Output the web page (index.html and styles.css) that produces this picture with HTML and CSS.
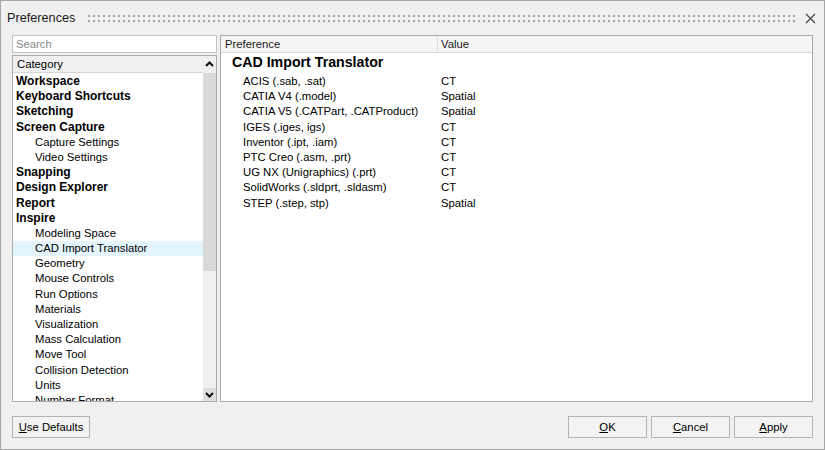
FILE: index.html
```html
<!DOCTYPE html>
<html>
<head>
<meta charset="utf-8">
<title>Preferences</title>
<link rel="stylesheet" href="styles.css">
</head>
<body>
<div class="window">
  <div class="titlebar">
    <span class="title">Preferences</span>
    <div class="grip"></div>
    <div class="close">
      <svg width="11" height="11" viewBox="0 0 11 11"><path d="M1 1 L10 10 M10 1 L1 10" stroke="#4a4a4a" stroke-width="1.3" fill="none"/></svg>
    </div>
  </div>
  <div class="main">
    <div class="leftcol">
      <div class="search">Search</div>
      <div class="listbox">
        <div class="listinner">
          <div class="listhead">Category</div>
          <div class="rows">
            <div class="row top">Workspace</div>
            <div class="row top">Keyboard Shortcuts</div>
            <div class="row top">Sketching</div>
            <div class="row top">Screen Capture</div>
            <div class="row sub">Capture Settings</div>
            <div class="row sub">Video Settings</div>
            <div class="row top">Snapping</div>
            <div class="row top">Design Explorer</div>
            <div class="row top">Report</div>
            <div class="row top">Inspire</div>
            <div class="row sub">Modeling Space</div>
            <div class="row sub selected">CAD Import Translator</div>
            <div class="row sub">Geometry</div>
            <div class="row sub">Mouse Controls</div>
            <div class="row sub">Run Options</div>
            <div class="row sub">Materials</div>
            <div class="row sub">Visualization</div>
            <div class="row sub">Mass Calculation</div>
            <div class="row sub">Move Tool</div>
            <div class="row sub">Collision Detection</div>
            <div class="row sub">Units</div>
            <div class="row sub">Number Format</div>
          </div>
        </div>
        <div class="scrollbar">
          <div class="sb-up">
            <svg width="9" height="6" viewBox="0 0 9 6"><path d="M1 5 L4.5 1.5 L8 5" stroke="#111" stroke-width="2" fill="none"/></svg>
          </div>
          <div class="sb-thumb"></div>
          <div class="sb-track"></div>
          <div class="sb-down">
            <svg width="9" height="6" viewBox="0 0 9 6"><path d="M1 1 L4.5 4.5 L8 1" stroke="#111" stroke-width="2" fill="none"/></svg>
          </div>
        </div>
      </div>
    </div>
    <div class="panel">
      <div class="phead">
        <div class="pcol1">Preference</div>
        <div class="pcol2">Value</div>
      </div>
      <div class="section">CAD Import Translator</div>
      <div class="prow"><div class="pname">ACIS (.sab, .sat)</div><div class="pval">CT</div></div>
      <div class="prow"><div class="pname">CATIA V4 (.model)</div><div class="pval">Spatial</div></div>
      <div class="prow"><div class="pname">CATIA V5 (.CATPart, .CATProduct)</div><div class="pval">Spatial</div></div>
      <div class="prow"><div class="pname">IGES (.iges, igs)</div><div class="pval">CT</div></div>
      <div class="prow"><div class="pname">Inventor (.ipt, .iam)</div><div class="pval">CT</div></div>
      <div class="prow"><div class="pname">PTC Creo (.asm, .prt)</div><div class="pval">CT</div></div>
      <div class="prow"><div class="pname">UG NX (Unigraphics) (.prt)</div><div class="pval">CT</div></div>
      <div class="prow"><div class="pname">SolidWorks (.sldprt, .sldasm)</div><div class="pval">CT</div></div>
      <div class="prow"><div class="pname">STEP (.step, stp)</div><div class="pval">Spatial</div></div>
    </div>
  </div>
  <div class="footer">
    <button class="btn btn-defaults"><u>U</u>se Defaults</button>
    <div class="spacer"></div>
    <button class="btn"><u>O</u>K</button>
    <button class="btn"><u>C</u>ancel</button>
    <button class="btn"><u>A</u>pply</button>
  </div>
</div>
</body>
</html>
```

FILE: styles.css
```css
* { box-sizing: border-box; }
html, body { margin: 0; padding: 0; }
body {
  width: 825px;
  height: 450px;
  overflow: hidden;
  font-family: "Liberation Sans", Arial, sans-serif;
  font-size: 11.3px;
  color: #000;
  background: #f0f0f0;
}
.window {
  width: 825px;
  height: 450px;
  border: 1px solid #a6a6a6;
  background: #f0f0f0;
  display: flex;
  flex-direction: column;
}
.titlebar {
  height: 34px;
  flex: none;
  display: flex;
  align-items: center;
  padding-left: 6px;
}
.title {
  font-size: 12.7px;
  color: #1a1a1a;
  margin-top: -1px;
}
.grip {
  flex: 1;
  height: 8px;
  margin-left: 13px;
  margin-top: 1px;
  background-image: linear-gradient(to right, #a3a3a3 2px, transparent 2px);
  background-size: 5px 5px;
  background-repeat: repeat;
  -webkit-mask-image: linear-gradient(to bottom, #000 2px, transparent 2px);
  -webkit-mask-size: 5px 5px;
  mask-image: linear-gradient(to bottom, #000 2px, transparent 2px);
  mask-size: 5px 5px;
}
.close {
  width: 29px;
  flex: none;
  display: flex;
  justify-content: center;
  align-items: center;
  padding-left: 2px;
}
.close svg { display: block; }
.main {
  height: 367px;
  flex: none;
  display: flex;
  padding: 0 11px;
  gap: 3px;
}
.leftcol {
  width: 205px;
  flex: none;
  display: flex;
  flex-direction: column;
  gap: 2px;
}
.search {
  height: 18px;
  flex: none;
  background: #fff;
  border: 1px solid #c4c4c4;
  color: #8a8a8a;
  padding-left: 3px;
  line-height: 16px;
}
.listbox {
  flex: 1;
  border: 1px solid #ababab;
  background: #fff;
  display: flex;
  overflow: hidden;
}
.listinner {
  flex: 1;
  min-width: 0;
  overflow: hidden;
}
.listhead {
  height: 17px;
  background: #f0f0f0;
  border-bottom: 1px solid #d6d6d6;
  padding-left: 4px;
  line-height: 16px;
}
.rows { padding-top: 1px; }
.row {
  height: 15.2px;
  line-height: 15.2px;
  white-space: nowrap;
}
.row.top {
  font-weight: bold;
  font-size: 12px;
  padding-left: 3px;
}
.row.sub { padding-left: 22px; }
.row.selected { background: #e3f4fc; }
.scrollbar {
  width: 13px;
  flex: none;
  display: flex;
  flex-direction: column;
  background: #f0f0f0;
}
.sb-up {
  height: 17px;
  display: flex;
  align-items: center;
  justify-content: center;
  padding-bottom: 2px;
}
.sb-thumb {
  height: 198px;
  background: #d9d9d9;
}
.sb-track { flex: 1; background: #f0f0f0; }
.sb-down {
  height: 13px;
  background: #dedede;
  display: flex;
  align-items: center;
  justify-content: center;
}
.sb-up svg, .sb-down svg { display: block; }
.panel {
  flex: 1;
  border: 1px solid #ababab;
  background: #fff;
  overflow: hidden;
}
.phead {
  height: 17px;
  display: flex;
  background: #f5f5f5;
  border-bottom: 1px solid #d9d9d9;
  line-height: 16px;
  color: #1a1a1a;
}
.pcol1 {
  width: 217px;
  flex: none;
  padding-left: 4px;
  border-right: 1px solid #dcdcdc;
}
.pcol2 { padding-left: 3px; }
.section {
  height: 21px;
  line-height: 19px;
  font-weight: bold;
  font-size: 14.2px;
  padding-left: 11px;
}
.prow {
  display: flex;
  height: 15.2px;
  line-height: 15.2px;
  white-space: nowrap;
}
.pname {
  width: 217px;
  flex: none;
  padding-left: 22px;
}
.pval { padding-left: 3px; }
.footer {
  flex: 1;
  display: flex;
  align-items: flex-start;
  padding: 14px 11px 0 11px;
  gap: 4px;
}
.spacer { flex: 1; }
.btn {
  height: 22px;
  width: 79px;
  font-family: "Liberation Sans", Arial, sans-serif;
  font-size: 11.3px;
  color: #000;
  background: #f3f3f3;
  border: 1px solid #b3b3b3;
  border-radius: 0;
  padding: 0;
  margin: 0;
}
.btn-defaults { width: 78px; }
.btn u { text-underline-offset: 1px; }
```
